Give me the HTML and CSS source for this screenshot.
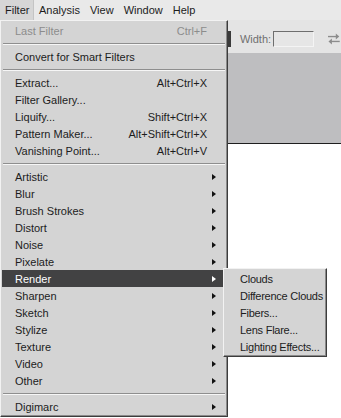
FILE: index.html
```html
<!DOCTYPE html>
<html lang="en">
<head>
  <meta charset="UTF-8" />
  <meta name="viewport" content="width=device-width, initial-scale=1.0"/>
  <title>Filter Menu</title>
  <link rel="stylesheet" href="styles.css">
</head>
<body>

<div class="menubar">
  <span class="menubar-item open">Filter</span>
  <span class="menubar-item">Analysis</span>
  <span class="menubar-item">View</span>
  <span class="menubar-item">Window</span>
  <span class="menubar-item">Help</span>
</div>

<div class="workspace">
  <div class="options-bar">
    <span class="dock-edge"></span>
    <span class="opt-label">Width:</span>
    <span class="opt-field"></span>
    <svg class="swap-icon" width="14" height="12" viewBox="0 0 14 12">
      <path d="M1 3.5h9" stroke="#8c8c8c" stroke-width="1.4" fill="none"/>
      <path d="M9 0.5l3.5 3-3.5 3z" fill="#8c8c8c"/>
      <path d="M13 8.5h-9" stroke="#8c8c8c" stroke-width="1.4" fill="none"/>
      <path d="M5 5.5l-3.5 3 3.5 3z" fill="#8c8c8c"/>
    </svg>
  </div>
  <div class="canvas-area"></div>
  <div class="document"></div>

  <!-- Filter dropdown -->
  <div class="menu filter-menu">
    <div class="item disabled"><span>Last Filter</span><span class="key">Ctrl+F</span></div>
    <div class="sep"></div>
    <div class="item"><span>Convert for Smart Filters</span></div>
    <div class="sep"></div>
    <div class="item"><span>Extract...</span><span class="key">Alt+Ctrl+X</span></div>
    <div class="item"><span>Filter Gallery...</span></div>
    <div class="item"><span>Liquify...</span><span class="key">Shift+Ctrl+X</span></div>
    <div class="item"><span>Pattern Maker...</span><span class="key">Alt+Shift+Ctrl+X</span></div>
    <div class="item"><span>Vanishing Point...</span><span class="key">Alt+Ctrl+V</span></div>
    <div class="sep"></div>
    <div class="item sub"><span>Artistic</span><i class="arrow"></i></div>
    <div class="item sub"><span>Blur</span><i class="arrow"></i></div>
    <div class="item sub"><span>Brush Strokes</span><i class="arrow"></i></div>
    <div class="item sub"><span>Distort</span><i class="arrow"></i></div>
    <div class="item sub"><span>Noise</span><i class="arrow"></i></div>
    <div class="item sub"><span>Pixelate</span><i class="arrow"></i></div>
    <div class="item sub active"><span>Render</span><i class="arrow"></i></div>
    <div class="item sub"><span>Sharpen</span><i class="arrow"></i></div>
    <div class="item sub"><span>Sketch</span><i class="arrow"></i></div>
    <div class="item sub"><span>Stylize</span><i class="arrow"></i></div>
    <div class="item sub"><span>Texture</span><i class="arrow"></i></div>
    <div class="item sub"><span>Video</span><i class="arrow"></i></div>
    <div class="item sub"><span>Other</span><i class="arrow"></i></div>
    <div class="sep"></div>
    <div class="item sub"><span>Digimarc</span><i class="arrow"></i></div>
  </div>

  <!-- Render submenu -->
  <div class="menu submenu">
    <div class="item"><span>Clouds</span></div>
    <div class="item"><span>Difference Clouds</span></div>
    <div class="item"><span>Fibers...</span></div>
    <div class="item"><span>Lens Flare...</span></div>
    <div class="item"><span>Lighting Effects...</span></div>
  </div>
</div>

</body>
</html>
```

FILE: styles.css
```css
body {
  margin: 0;
  font-family: "Liberation Sans", Arial, sans-serif;
  font-size: 11px;
  color: #1c1c1c;
  background: white;
  overflow: hidden;
}

/* top menu bar */
.menubar {
  height: 20px;
  display: flex;
  align-items: stretch;
  background: #e9e9e9;
  box-sizing: border-box;
}
.menubar-item {
  display: flex;
  align-items: center;
  padding: 0 5px;
}
.menubar-item.open {
  width: 23px;
  background: #d6d6d6;
  border-right: 1px solid #c4c4c4;
}

/* workspace behind the menu */
.workspace { position: relative; height: 398px; }
.options-bar {
  height: 33px;
  background: #e4e4e4;
  display: flex;
  align-items: center;
  padding-left: 227px;
  box-sizing: border-box;
}
.dock-edge {
  width: 4px; height: 16px;
  background: #3a3a3a;
  margin-top: 4px;
}
.opt-label { color: #707070; margin-left: 9px; margin-top: 4px; }
.opt-field {
  width: 40px; height: 14px;
  margin-left: 2px; margin-top: 4px;
  border: 1px solid #6e6e6e;
  border-right-color: #f4f4f4; border-bottom-color: #f4f4f4;
  background: #e6e6e6;
}
.swap-icon { margin-left: 13px; margin-top: 4px; }
.canvas-area {
  height: 90px;
  background: #bebec0;
  border-bottom: 1px solid #1e1e1e;
}
.document { background: white; }

/* dropdown menus */
.menu {
  position: absolute;
  background: #d4d4d4;
  border: 1px solid #f2f2f2;
  border-right-color: #3c3c3c;
  border-bottom-color: #3c3c3c;
  box-shadow: inset -1px -1px 0 #8a8a8a;
  box-sizing: border-box;
  padding: 1px 2px 1px 1px;
}
.filter-menu { top: 0; left: 0; width: 228px; height: 397px; }
.submenu { top: 248px; left: 223px; width: 104px; padding-left: 1px; padding-right: 0; }

.item {
  height: 17px;
  display: flex;
  align-items: center;
  padding: 0 8px 0 13px;
  white-space: nowrap;
}
.item .key { margin-left: auto; margin-right: 10px; }
.item .arrow {
  margin-left: auto;
  margin-right: 1px;
  width: 0; height: 0;
  border-top: 3.5px solid transparent;
  border-bottom: 3.5px solid transparent;
  border-left: 4px solid #111;
}
.item.disabled { color: #8c8c8c; }
.item.active { background: #424243; color: white; }
.item.active .arrow { border-left-color: white; }
.submenu .item { padding: 0 0 0 15px; letter-spacing: -0.25px; }

.sep {
  height: 0;
  margin: 4px 0 3px 1px;
  border-top: 1px solid #8e8e8e;
  border-bottom: 1px solid #f6f6f6;
}
```
